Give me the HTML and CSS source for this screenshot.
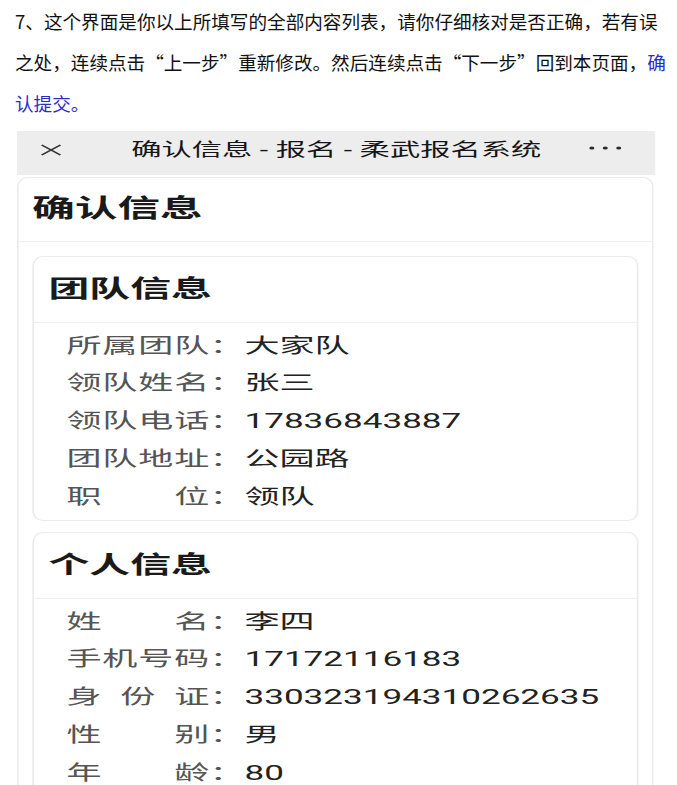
FILE: index.html
```
<!DOCTYPE html>
<html lang="zh-CN">
<head>
<meta charset="utf-8">
<title>确认信息</title>
<link rel="stylesheet" href="styles.css">
</head>
<body>
<div class="doc">
  <p class="intro"><span>7、这个界面是你以上所填写的全部内容列表，请你仔细核对是否正确，若有误</span><span>之处，连续点击“上一步”重新修改。然后连续点击“下一步”回到本页面，</span><span class="link">确</span><span class="link">认提交。</span></p>
  <div class="phone">
    <div class="bar">
      <div class="bar-close">
        <svg width="14" height="12" viewBox="0 0 14 12"><path d="M1.5 1 L12.5 11 M12.5 1 L1.5 11" stroke="#333" stroke-width="1.2" fill="none"/></svg>
      </div>
      <div class="bar-title">确认信息 - 报名 - 柔武报名系统</div>
      <div class="bar-more">
        <svg width="19" height="4" viewBox="0 0 19 4"><circle cx="1.6" cy="2" r="1.5" fill="#2a2a2a"/><circle cx="9.5" cy="2" r="1.5" fill="#2a2a2a"/><circle cx="17.4" cy="2" r="1.5" fill="#2a2a2a"/></svg>
      </div>
    </div>
    <div class="sheet">
      <div class="sheet-head">确认信息</div>
      <div class="sheet-body">
        <div class="card">
          <div class="card-head">团队信息</div>
          <div class="card-body">
            <div class="row"><span class="label">所属团队</span><span class="colon">：</span><span class="value">大家队</span></div>
            <div class="row"><span class="label">领队姓名</span><span class="colon">：</span><span class="value">张三</span></div>
            <div class="row"><span class="label">领队电话</span><span class="colon">：</span><span class="value">17836843887</span></div>
            <div class="row"><span class="label">团队地址</span><span class="colon">：</span><span class="value">公园路</span></div>
            <div class="row"><span class="label">职位</span><span class="colon">：</span><span class="value">领队</span></div>
          </div>
        </div>
        <div class="card">
          <div class="card-head">个人信息</div>
          <div class="card-body">
            <div class="row"><span class="label">姓名</span><span class="colon">：</span><span class="value">李四</span></div>
            <div class="row"><span class="label">手机号码</span><span class="colon">：</span><span class="value">17172116183</span></div>
            <div class="row"><span class="label">身份证</span><span class="colon">：</span><span class="value">330323194310262635</span></div>
            <div class="row"><span class="label">性别</span><span class="colon">：</span><span class="value">男</span></div>
            <div class="row"><span class="label">年龄</span><span class="colon">：</span><span class="value">80</span></div>
          </div>
        </div>
      </div>
    </div>
  </div>
</div>
</body>
</html>
```
FILE: styles.css
```
* { box-sizing: border-box; }
html, body { margin: 0; padding: 0; background: #fff; overflow: hidden; }
body { width: 677px; height: 785px; }

.doc { width: 677px; height: 785px; overflow: hidden; }

.intro {
  margin: 0;
  padding: 0 0 0 15px;
  width: 668px;
  font-family: "Noto Sans CJK SC", sans-serif;
  font-size: 18.6px;
  line-height: 41px;
  color: #111;
  text-spacing-trim: space-all;
}
.link { color: #2c2cc8; }

.phone {
  margin: 8px 0 0 16.5px;
  width: 375px;
  height: 654px;
  overflow: hidden;
  background: #fff;
  transform: scaleX(1.7027);
  transform-origin: 0 0;
  font-family: Roboto, "Noto Sans CJK SC", sans-serif;
}

.bar {
  height: 44px;
  padding-bottom: 6px;
  background: #ededed;
  display: grid;
  grid-template-columns: 1fr auto 1fr;
  align-items: center;
}
.bar-close { padding-left: 13px; display: flex; }
.bar-title { font-size: 17.8px; line-height: 22px; color: #161616; white-space: nowrap; }
.bar-more { justify-self: end; padding-right: 20.5px; display: flex; margin-bottom: 4px; }

.sheet {
  margin: 2px 1px 0 0;
  border: 1px solid #ebebeb;
  border-bottom: none;
  border-radius: 6px 6px 0 0 / 10px 10px 0 0;
}
.sheet-head {
  height: 64px;
  padding: 0 0 1px 8px;
  border-bottom: 1px solid #efefef;
  display: flex;
  align-items: center;
  font-size: 25px;
  line-height: 30px;
  font-weight: 700;
  color: #1a1a1a;
}
.sheet-body { padding: 14px 8px 0 7.5px; }

.card {
  border: 1px solid #ebebeb;
  border-radius: 6px / 10px;
  margin-bottom: 11px;
}
.card-head {
  height: 66px;
  padding: 0 0 1px 9px;
  border-bottom: 1px solid #efefef;
  display: flex;
  align-items: center;
  font-size: 24px;
  line-height: 30px;
  font-weight: 700;
  color: #1a1a1a;
}
.card-body { padding: 4.5px 0 3.75px 19.5px; }

.row {
  font-size: 20.6px;
  line-height: 37.75px;
  white-space: nowrap;
}
.label {
  display: inline-block;
  width: 84px;
  text-align: justify;
  text-align-last: justify;
  color: #555;
}
.colon { color: #555; }
.value { color: #222; }
```
